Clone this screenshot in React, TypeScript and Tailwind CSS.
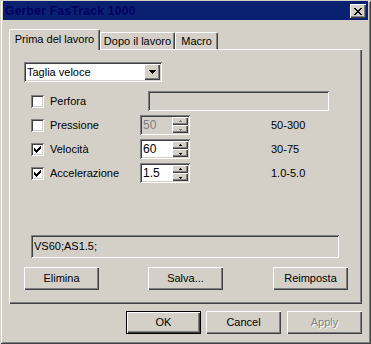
import React from "react";

const raised =
  "shadow-[inset_1px_1px_#ffffff,inset_-1px_-1px_#404040,inset_-2px_-2px_#808080]";
const sunken =
  "shadow-[inset_1px_1px_#808080,inset_-1px_-1px_#ffffff,inset_2px_2px_#404040,inset_-2px_-2px_#d4d0c8]";

function Check({ on }: { on?: boolean }) {
  return (
    <div className={`w-[13px] h-[13px] bg-white ${sunken} flex items-center justify-center shrink-0`}>
      {on && (
        <svg width="7" height="7" viewBox="0 0 7 7" shapeRendering="crispEdges">
          <rect x="0" y="2" width="1" height="3" fill="#000" />
          <rect x="1" y="3" width="1" height="3" fill="#000" />
          <rect x="2" y="4" width="1" height="3" fill="#000" />
          <rect x="3" y="3" width="1" height="3" fill="#000" />
          <rect x="4" y="2" width="1" height="3" fill="#000" />
          <rect x="5" y="1" width="1" height="3" fill="#000" />
          <rect x="6" y="0" width="1" height="3" fill="#000" />
        </svg>
      )}
    </div>
  );
}

function Arrow({ up, color }: { up?: boolean; color: string }) {
  return (
    <svg width="5" height="3" viewBox="0 0 5 3" shapeRendering="crispEdges">
      {up ? (
        <>
          <rect x="2" y="0" width="1" height="1" fill={color} />
          <rect x="1" y="1" width="3" height="1" fill={color} />
        </>
      ) : (
        <>
          <rect x="1" y="1" width="3" height="1" fill={color} />
          <rect x="2" y="2" width="1" height="1" fill={color} />
        </>
      )}
    </svg>
  );
}

function Spin({ value, disabled }: { value: string; disabled?: boolean }) {
  const c = disabled ? "#808080" : "#000";
  return (
    <div
      className={`w-[50px] h-[20px] ${sunken} ${disabled ? "bg-[#d4d0c8] text-[#808080]" : "bg-white"} flex items-center p-[2px]`}
    >
      <span className="flex-1 pl-[1px] text-[12px]">{value}</span>
      <div className="flex flex-col w-[16px] h-[16px]">
        <div className={`h-[8px] bg-[#d4d0c8] ${raised} flex items-center justify-center`}>
          <Arrow up color={c} />
        </div>
        <div className={`h-[8px] bg-[#d4d0c8] ${raised} flex items-center justify-center`}>
          <Arrow color={c} />
        </div>
      </div>
    </div>
  );
}

function Btn({ label, disabled, def }: { label: string; disabled?: boolean; def?: boolean }) {
  const inner = (
    <div
      className={`w-full h-full bg-[#d4d0c8] ${raised} flex items-center justify-center ${
        disabled ? "text-[#808080] [text-shadow:1px_1px_#ffffff]" : ""
      }`}
    >
      {label}
    </div>
  );
  if (def)
    return <div className="w-[75px] h-[23px] border border-black">{inner}</div>;
  return <div className="w-[75px] h-[23px]">{inner}</div>;
}

function Row({
  label,
  on,
  children,
}: {
  label: string;
  on?: boolean;
  children: React.ReactNode;
}) {
  return (
    <div className="flex items-center h-[20px]">
      <div className="ml-[22px] w-[109px] flex items-center gap-[6px]">
        <Check on={on} />
        <span>{label}</span>
      </div>
      {children}
    </div>
  );
}

export default function App() {
  return (
    <div className="w-[371px] h-[344px] bg-[#d4d0c8] pt-[1px] px-[3px] font-['Liberation_Sans',Arial,sans-serif] text-[11px] text-black leading-none shadow-[inset_1px_1px_#d4d0c8,inset_-1px_-1px_#404040,inset_2px_2px_#ffffff,inset_-2px_-2px_#808080]">
      {/* title bar */}
      <div className="h-[19px] bg-[#0a2070] flex items-center justify-between pl-[2px] pr-[2px]">
        <span className="text-[12px] font-bold text-[#000060] tracking-[0.3px]">
          Gerber FasTrack 1000
        </span>
        <div className={`w-[16px] h-[14px] mt-[1px] bg-[#d4d0c8] ${raised} flex items-center justify-center`}>
          <svg width="8" height="7" viewBox="0 0 8 7" shapeRendering="crispEdges">
            <path d="M0 0h2v1h-2zM6 0h2v1h-2zM1 1h2v1h-2zM5 1h2v1h-2zM2 2h4v1h-4zM3 3h2v1h-2zM2 4h4v1h-4zM1 5h2v1h-2zM5 5h2v1h-2zM0 6h2v1h-2zM6 6h2v1h-2z" fill="#000" />
          </svg>
        </div>
      </div>

      {/* tabs */}
      <div className="mt-[9px] ml-[6px] flex items-end h-[20px]">
        <div className="relative z-10 w-[91px] h-[21px] -mb-[1px] bg-[#d4d0c8] border-l border-t border-white border-r border-r-[#404040] rounded-t-[2px] shadow-[inset_-1px_0_#808080] flex items-center justify-center pb-[2px]">
          Prima del lavoro
        </div>
        <div className="w-[75px] h-[17px] bg-[#d4d0c8] border-l border-t border-white border-r border-r-[#404040] rounded-t-[2px] shadow-[inset_-1px_0_#808080] flex items-center justify-center">
          Dopo il lavoro
        </div>
        <div className="w-[43px] h-[17px] bg-[#d4d0c8] border-l border-t border-white border-r border-r-[#404040] rounded-t-[2px] shadow-[inset_-1px_0_#808080] flex items-center justify-center">
          Macro
        </div>
      </div>

      {/* panel */}
      <div className="ml-[6px] w-[353px] h-[255px] bg-[#d4d0c8] shadow-[inset_1px_1px_#ffffff,inset_-1px_-1px_#404040,inset_-2px_-2px_#808080] pt-[13px] flex flex-col">
        <div className={`ml-[15px] w-[138px] h-[20px] bg-white ${sunken} flex items-center p-[2px]`}>
          <span className="flex-1 pl-[1px]">Taglia veloce</span>
          <div className={`w-[16px] h-[16px] bg-[#d4d0c8] ${raised} flex items-center justify-center`}>
            <svg width="7" height="4" viewBox="0 0 7 4" shapeRendering="crispEdges">
              <path d="M0 0h7v1h-7zM1 1h5v1h-5zM2 2h3v1h-3zM3 3h1v1h-1z" fill="#000" />
            </svg>
          </div>
        </div>

        <div className="mt-[9px] flex flex-col gap-[4px]">
          <Row label="Perfora">
            <div className={`ml-[8px] w-[181px] h-[20px] ${sunken}`} />
          </Row>
          <Row label="Pressione">
            <Spin value="50" disabled />
            <span className="ml-[81px]">50-300</span>
          </Row>
          <Row label="Velocità" on>
            <Spin value="60" />
            <span className="ml-[81px]">30-75</span>
          </Row>
          <Row label="Accelerazione" on>
            <Spin value="1.5" />
            <span className="ml-[81px]">1.0-5.0</span>
          </Row>
        </div>

        <div className={`mt-[52px] ml-[22px] w-[308px] h-[23px] ${sunken} flex items-center pl-[3px]`}>
          VS60;AS1.5;
        </div>

        <div className="mt-[9px] flex">
          <div className="ml-[15px]">
            <Btn label="Elimina" />
          </div>
          <div className="ml-[49px]">
            <Btn label="Salva..." />
          </div>
          <div className="ml-[50px]">
            <Btn label="Reimposta" />
          </div>
        </div>
      </div>

      {/* dialog buttons */}
      <div className="mt-[7px] ml-[123px] flex">
        <Btn label="OK" def />
        <div className="ml-[5px]">
          <Btn label="Cancel" />
        </div>
        <div className="ml-[6px]">
          <Btn label="Apply" disabled />
        </div>
      </div>
    </div>
  );
}
